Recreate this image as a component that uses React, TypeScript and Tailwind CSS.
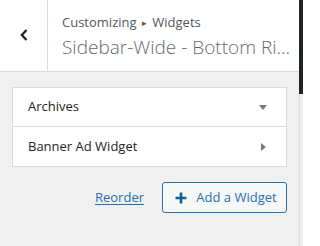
import React from "react";

export default function App() {
  const font = { fontFamily: '"Open Sans", "Noto Sans", sans-serif' };
  return (
    <div className="flex w-[303px] h-[246px] overflow-hidden bg-[#f0f0f1]" style={font}>
      <div className="flex flex-col w-[299px] h-full">
        <div className="flex h-[72px] bg-white border-b border-[#dcdcde] shrink-0">
          <div className="w-[48px] h-full border-r border-[#dcdcde] flex items-center justify-center shrink-0">
            <svg width="10" height="14" viewBox="0 0 10 14" className="mt-[-1px]">
              <path d="M7.5 2 L2.8 7 L7.5 12" fill="none" stroke="#1d2327" strokeWidth="2.3" />
            </svg>
          </div>
          <div className="flex flex-col justify-center pl-[14px] pr-[6px] min-w-0 flex-1">
            <div className="text-[13px] leading-[20px] text-[#50575e] mt-[1px]">
              Customizing <span className="text-[9px] relative top-[-1px] mx-[2px]">▸</span> Widgets
            </div>
            <div className="text-[19px] leading-[27px] font-light text-[#646970] whitespace-nowrap">
              Sidebar-Wide - Bottom Ri...
            </div>
          </div>
        </div>
        <div className="px-[12px] pt-[15px]">
          <div className="bg-white border border-[#dcdcde]">
            <div className="h-[39px] flex items-center justify-between pl-[15px] pr-[19px] border-b border-[#dcdcde]">
              <span className="text-[13px] text-[#1d2327]">Archives</span>
              <svg width="8" height="5" viewBox="0 0 8 5"><path d="M0 0 H8 L4 5 Z" fill="#787c82" /></svg>
            </div>
            <div className="h-[39px] flex items-center justify-between pl-[15px] pr-[20px]">
              <span className="text-[13px] text-[#1d2327]">Banner Ad Widget</span>
              <svg width="5" height="8" viewBox="0 0 5 8"><path d="M0 0 V8 L5 4 Z" fill="#787c82" /></svg>
            </div>
          </div>
          <div className="flex items-center justify-end gap-[18px] mt-[15px]">
            <a className="text-[13px] text-[#2271b1] underline underline-offset-2">Reorder</a>
            <button className="h-[31px] w-[125px] flex items-center justify-center gap-[9px] pl-[3px] border border-[#2271b1] rounded-[3px] bg-[#f6f7f7] text-[13px] text-[#2271b1]">
              <svg width="12" height="12" viewBox="0 0 12 12"><path d="M6 0.5 V11.5 M0.5 6 H11.5" stroke="#135e96" strokeWidth="2.6" /></svg>
              <span>Add a Widget</span>
            </button>
          </div>
        </div>
      </div>
      <div className="w-[4px] h-full flex flex-col">
        <div className="h-[94px] bg-[#1d2327]" />
        <div className="flex-1 border-l border-[#dcdcde] bg-[#f0f0f1]" />
      </div>
    </div>
  );
}
